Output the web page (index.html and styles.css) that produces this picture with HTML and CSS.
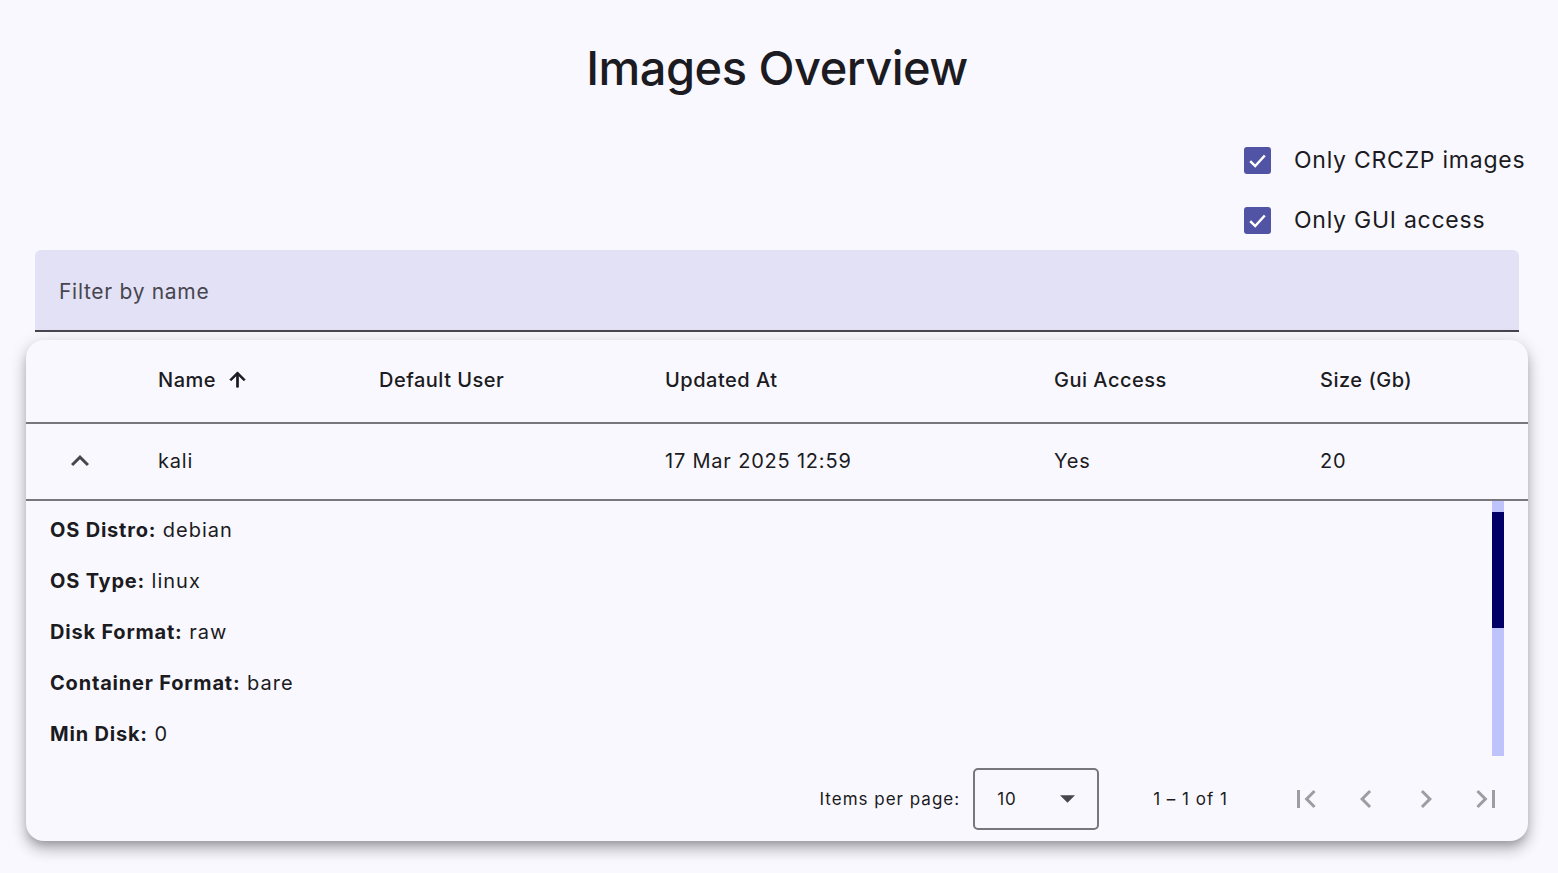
FILE: index.html
```
<!DOCTYPE html>
<html lang="en">

<head>
    <meta charset="UTF-8">
    <meta name="viewport" content="width=device-width, initial-scale=1.0">
    <title>Images Overview</title>
    <link rel="stylesheet" href="styles.css">
</head>

<body>
    <div class="page">
        <h1 class="page-title">Images Overview</h1>

        <!-- filters -->
        <div class="filters">
            <label class="check-row">
                <span class="check-box">
                    <svg viewBox="0 0 24 24"><polyline points="5 12.5 9.8 17.3 19 7.2" /></svg>
                </span>
                <span class="check-label">Only CRCZP images</span>
            </label>
            <label class="check-row">
                <span class="check-box">
                    <svg viewBox="0 0 24 24"><polyline points="5 12.5 9.8 17.3 19 7.2" /></svg>
                </span>
                <span class="check-label">Only GUI access</span>
            </label>
        </div>

        <div class="filter-field">
            <span class="placeholder">Filter by name</span>
        </div>

        <!-- table card -->
        <div class="card">
            <div class="row header-row">
                <div class="cell"></div>
                <div class="cell sort-cell">Name
                    <svg class="sort-icon" viewBox="0 0 24 24"><path d="M4 12l1.41 1.41L11 7.83V20h2V7.83l5.58 5.59L20 12l-8-8-8 8z" /></svg>
                </div>
                <div class="cell">Default User</div>
                <div class="cell">Updated At</div>
                <div class="cell">Gui Access</div>
                <div class="cell">Size (Gb)</div>
            </div>

            <div class="row data-row">
                <div class="cell expand-cell">
                    <svg class="expand-icon" viewBox="0 0 24 24"><path d="M12 8l-6 6 1.41 1.41L12 10.83l4.59 4.58L18 14z" /></svg>
                </div>
                <div class="cell">kali</div>
                <div class="cell"></div>
                <div class="cell">17 Mar 2025 12:59</div>
                <div class="cell">Yes</div>
                <div class="cell">20</div>
            </div>

            <div class="detail">
                <div class="detail-list">
                    <p><b>OS Distro:</b> debian</p>
                    <p><b>OS Type:</b> linux</p>
                    <p><b>Disk Format:</b> raw</p>
                    <p><b>Container Format:</b> bare</p>
                    <p><b>Min Disk:</b> 0</p>
                </div>
                <div class="scroll-track">
                    <div class="scroll-thumb"></div>
                </div>
            </div>

            <div class="paginator">
                <span class="page-size-label">Items per page:</span>
                <div class="page-size-select">
                    <span>10</span>
                    <svg class="select-arrow" viewBox="0 0 10 5"><path d="M0 0l5 5 5-5z" /></svg>
                </div>
                <span class="range-label">1 – 1 of 1</span>
                <div class="nav-buttons">
                    <svg class="nav-icon" viewBox="0 0 24 24"><path d="M18.41 16.59L13.82 12l4.59-4.59L17 6l-6 6 6 6zM6 6h2v12H6z" /></svg>
                    <svg class="nav-icon" viewBox="0 0 24 24"><path d="M15.41 7.41L14 6l-6 6 6 6 1.41-1.41L10.83 12z" /></svg>
                    <svg class="nav-icon" viewBox="0 0 24 24"><path d="M10 6L8.59 7.41 13.17 12l-4.58 4.59L10 18l6-6z" /></svg>
                    <svg class="nav-icon" viewBox="0 0 24 24"><path d="M5.59 7.41L10.18 12l-4.59 4.59L7 18l6-6-6-6zM16 6h2v12h-2z" /></svg>
                </div>
            </div>
        </div>
    </div>
</body>

</html>
```

FILE: styles.css
```
/* base */
body,
html {
    margin: 0;
    padding: 0;
}

body {
    background-color: #f9f8ff;
    color: #1b1b21;
    font-family: Inter, "Noto Sans", sans-serif;
}

.page {
    padding: 0 30px 33px 26px;
}

.page-title {
    margin: 39px 0 33px;
    font-size: 47px;
    line-height: 58px;
    font-weight: 500;
    text-align: center;
    letter-spacing: -0.5px;
}

/* checkboxes */
.filters {
    display: flex;
    flex-direction: column;
    align-items: flex-start;
    margin-left: auto;
    width: 284px;
}

.check-row {
    display: flex;
    align-items: center;
    height: 60px;
    gap: 23px;
}

.check-box {
    width: 27px;
    height: 27px;
    border-radius: 3px;
    background-color: #5154a4;
    display: flex;
    align-items: center;
    justify-content: center;
}

.check-box svg {
    width: 25px;
    height: 25px;
    fill: none;
    stroke: #fff;
    stroke-width: 2.4;
}

.check-label {
    font-size: 23px;
    letter-spacing: 0.75px;
}

/* filter input */
.filter-field {
    margin: 0 9px;
    height: 80px;
    background-color: #e3e1f5;
    border-bottom: 2px solid #47464f;
    border-radius: 6px 6px 0 0;
    display: flex;
    align-items: center;
    padding-left: 24px;
}

.placeholder {
    font-size: 21px;
    color: #47464f;
    letter-spacing: 0.7px;
    padding-top: 2px;
}

/* card */
.card {
    margin-top: 8px;
    height: 501px;
    border-radius: 18px;
    background-color: #f9f8ff;
    box-shadow: 0 6px 8px -3px rgba(0, 0, 0, 0.22), 0 10px 14px 1px rgba(0, 0, 0, 0.14), 0 3px 16px 2px rgba(0, 0, 0, 0.12);
    overflow: hidden;
    display: flex;
    flex-direction: column;
}

.row {
    display: grid;
    grid-template-columns: 108px 221px 286px 389px 266px 1fr;
    align-items: center;
    border-bottom: 2px solid #79767f;
    font-size: 20px;
    box-sizing: border-box;
}

.row .cell {
    padding-left: 24px;
    display: flex;
    align-items: center;
}

.header-row {
    height: 84px;
    font-weight: 500;
    letter-spacing: 0.5px;
    padding-bottom: 3px;
}

.data-row {
    height: 77px;
    letter-spacing: 0.8px;
    padding-bottom: 1px;
}

.sort-icon {
    width: 23px;
    height: 23px;
    margin-left: 10px;
    fill: #1b1b21;
    stroke: #1b1b21;
    stroke-width: 0.8;
}

.row .expand-cell {
    padding-left: 0;
    justify-content: center;
}

.expand-icon {
    width: 36px;
    height: 36px;
    fill: #46464f;
}

/* expanded detail */
.detail {
    height: 257px;
    display: flex;
    overflow: hidden;
}

.detail-list {
    flex: 1;
    padding: 4px 0 0 24px;
    font-size: 20px;
    letter-spacing: 1px;
}

.detail-list p {
    margin: 0;
    line-height: 51px;
}

.detail-list b {
    font-weight: 700;
    letter-spacing: 0.8px;
}

.scroll-track {
    width: 12px;
    height: 255px;
    margin-right: 24px;
    background-color: #bfc3fb;
}

.scroll-thumb {
    margin-top: 11px;
    height: 116px;
    background-color: #000066;
}

/* paginator */
.paginator {
    flex: 1;
    display: flex;
    align-items: center;
    justify-content: flex-end;
    font-size: 17px;
    letter-spacing: 1px;
    padding-right: 12px;
    padding-bottom: 2px;
}

.page-size-label {
    margin-right: 13px;
}

.page-size-select {
    width: 122px;
    height: 58px;
    border: 2px solid #79767f;
    border-radius: 5px;
    display: flex;
    align-items: center;
}

.page-size-select span {
    padding-left: 22px;
    flex: 1;
}

.select-arrow {
    width: 15px;
    height: 8px;
    fill: #47464f;
    margin-right: 22px;
}

.range-label {
    margin-left: 54px;
    margin-right: 48px;
}

.nav-buttons {
    display: flex;
}

.nav-icon {
    width: 36px;
    height: 36px;
    padding: 0 12px;
    fill: #9e9da4;
}
```
